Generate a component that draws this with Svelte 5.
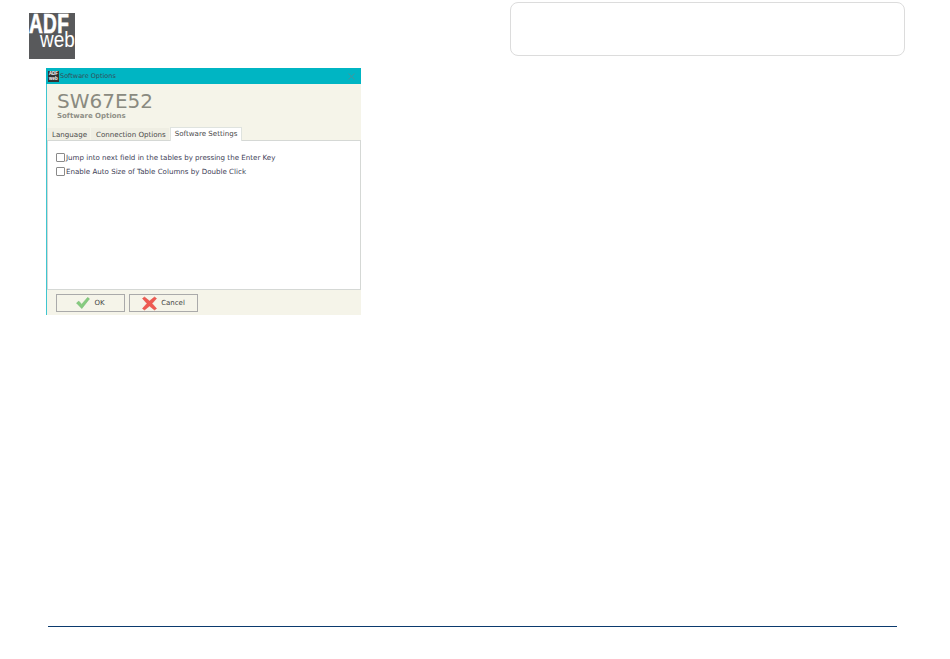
<script>
  const tabs = ['Language', 'Connection Options', 'Software Settings'];
  const options = [
    'Jump into next field in the tables by pressing the Enter Key',
    'Enable Auto Size of Table Columns by Double Click'
  ];
</script>

<div class="page">
  <header>
    <div class="logo">
      <span class="adf">ADF</span>
      <span class="web">web</span>
    </div>
    <div class="note"></div>
  </header>

  <section class="dialog">
    <div class="titlebar">
      <div class="mini-logo"><span>ADF</span><span>web</span></div>
      <span class="title">Software Options</span>
      <svg class="close" width="7" height="7" viewBox="0 0 7 7">
        <path d="M0.5 0.5 L6.5 6.5 M6.5 0.5 L0.5 6.5" stroke="#4f8f96" stroke-width="0.9" fill="none" />
      </svg>
    </div>

    <div class="banner">
      <div class="product">SW67E52</div>
      <div class="subtitle">Software Options</div>
    </div>

    <div class="tabs">
      {#each tabs as tab, i}
        <div class="tab" class:active={i === 2}>{tab}</div>
      {/each}
    </div>

    <div class="panel">
      {#each options as option}
        <label class="option">
          <span class="box"></span>
          <span>{option}</span>
        </label>
      {/each}
    </div>

    <div class="actions">
      <button>
        <svg width="14" height="12" viewBox="0 0 15 13">
          <path d="M0.5 6.5 L3 4.5 L6 8 L12.5 0.5 L14.5 2 L6.2 12.5 Z" fill="#86cc7e" stroke="#6bb56b" stroke-width="0.6" />
        </svg>
        OK
      </button>
      <button>
        <svg width="15" height="15" viewBox="0 0 15 14">
          <path d="M0.5 2 L2.5 0.5 L7.5 4.5 L12.5 0.5 L14.5 2 L10 7 L14.5 12 L12.5 13.5 L7.5 9.5 L2.5 13.5 L0.5 12 L5 7 Z" fill="#ee5a52" stroke="#e0483f" stroke-width="0.5" />
        </svg>
        Cancel
      </button>
    </div>
  </section>

  <footer></footer>
</div>

<style>
  :global(body) {
    margin: 0;
    background: #fff;
  }

  .page {
    width: 950px;
    height: 659px;
    display: flex;
    flex-direction: column;
    font-family: "DejaVu Sans", sans-serif;
    overflow: hidden;
  }

  header {
    display: flex;
    justify-content: space-between;
    align-items: flex-start;
    padding: 2px 45px 0 29px;
    height: 68px;
    box-sizing: border-box;
  }

  .logo {
    position: relative;
    width: 46px;
    height: 46px;
    margin-top: 11px;
    background: #58595b;
  }

  .adf {
    position: absolute;
    left: 0;
    top: -3px;
    font: bold 28px/28px "Liberation Sans", sans-serif;
    color: #fff;
    -webkit-text-stroke: 0.7px #fff;
    transform: scaleX(0.68);
    transform-origin: left top;
    letter-spacing: 0.5px;
  }

  .web {
    position: absolute;
    left: 11px;
    top: 15px;
    font: 22px/24px "Liberation Sans", sans-serif;
    color: #fff;
    transform: scaleX(0.86);
    transform-origin: left top;
  }

  .note {
    width: 395px;
    height: 54px;
    box-sizing: border-box;
    border: 1px solid #dcdcdc;
    border-radius: 8px;
  }

  .dialog {
    width: 315px;
    height: 247px;
    margin-left: 46px;
    box-sizing: border-box;
    border-left: 1px solid #3fc6d0;
    background: #f5f4e9;
    display: flex;
    flex-direction: column;
    font-size: 7.1px;
    color: #444;
  }

  .titlebar {
    height: 16px;
    margin-left: -1px;
    background: #00b5c3;
    display: flex;
    align-items: center;
    padding: 0 6px 0 2px;
    gap: 1px;
    color: #33505a;
    font-size: 6.5px;
  }

  .mini-logo {
    width: 11px;
    height: 11px;
    background: #333;
    color: #fff;
    font: bold 4.5px/5px "Liberation Sans", sans-serif;
    display: flex;
    flex-direction: column;
    align-items: center;
    justify-content: center;
  }

  .title {
    flex: 1;
  }

  .banner {
    height: 43px;
    padding: 7px 0 0 10px;
    box-sizing: border-box;
  }

  .product {
    font-size: 20px;
    line-height: 21px;
    color: #8a8a80;
  }

  .subtitle {
    font-size: 7px;
    line-height: 8px;
    font-weight: bold;
    color: #8f8f86;
  }

  .tabs {
    display: flex;
    height: 13px;
    align-items: flex-end;
  }

  .tab {
    height: 12px;
    line-height: 13px;
    padding: 0 3px 0 5px;
    margin-right: 1px;
    background: #efeee3;
    color: #4a4a4a;
  }

  .tab.active {
    position: relative;
    height: 13px;
    line-height: 12px;
    padding: 0 4px;
    margin-bottom: -1px;
    background: #fff;
    border: 1px solid #dfe3df;
    border-bottom: none;
    z-index: 1;
  }

  .panel {
    height: 150px;
    box-sizing: border-box;
    background: #fff;
    border: 1px solid #d5d8d5;
    padding: 12px 8px;
    display: flex;
    flex-direction: column;
    gap: 5px;
  }

  .option {
    display: flex;
    align-items: center;
    height: 9px;
    gap: 1px;
    color: #3d3d55;
  }

  .box {
    width: 7px;
    height: 7px;
    border: 1px solid #8a8a8a;
    border-radius: 1px;
    background: #fff;
  }

  .actions {
    display: flex;
    gap: 4px;
    padding: 4px 0 0 9px;
  }

  button {
    width: 69px;
    height: 18px;
    padding: 0;
    display: flex;
    align-items: center;
    justify-content: center;
    gap: 4px;
    background: #f5f4e9;
    border: 1px solid #aaa;
    font: 7px "DejaVu Sans", sans-serif;
    color: #444;
  }

  footer {
    width: 849px;
    height: 1px;
    margin: 311px 0 0 48px;
    background: #0b3a6e;
  }
</style>
